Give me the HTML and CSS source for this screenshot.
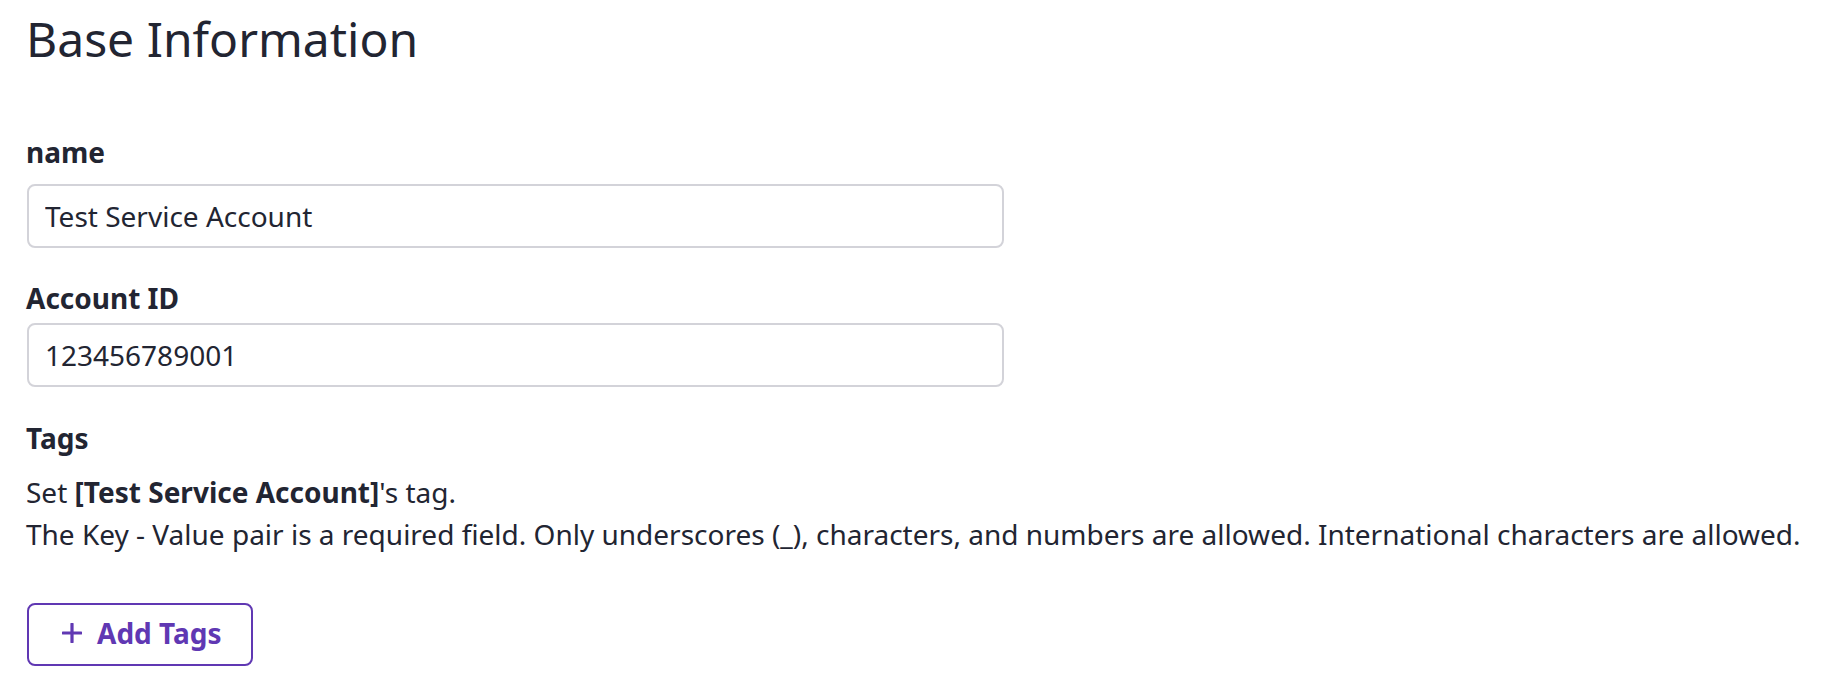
FILE: index.html
```html
<!DOCTYPE html>
<html lang="en">
<head>
<meta charset="utf-8">
<title>Base Information</title>
<link rel="stylesheet" href="styles.css">
</head>
<body>
<main class="page">
  <h1 class="title">Base Information</h1>

  <div class="field field-name">
    <label class="field-label" for="name">name</label>
    <input class="text-input" id="name" type="text" value="Test Service Account">
  </div>

  <div class="field field-account">
    <label class="field-label" for="account-id">Account ID</label>
    <input class="text-input" id="account-id" type="text" value="123456789001">
  </div>

  <section class="tags">
    <div class="field-label">Tags</div>
    <p class="tags-help">Set <strong>[Test Service Account]</strong>'s tag.<br>The Key - Value pair is a required field. Only underscores (_), characters, and numbers are allowed. International characters are allowed.</p>
    <button class="add-btn" type="button">
      <svg class="plus" viewBox="0 0 20 20" width="20" height="20" aria-hidden="true"><path d="M10 1v18M1 10h18" stroke="currentColor" stroke-width="3.2" stroke-linecap="round" fill="none"/></svg>
      <span>Add Tags</span>
    </button>
  </section>
</main>
</body>
</html>
```

FILE: styles.css
```css
* { box-sizing: border-box; }

html, body {
  margin: 0;
  background: #ffffff;
}

body {
  font-family: "Noto Sans", "Open Sans", sans-serif;
  color: #222532;
}

.page {
  padding: 7px 26px 0 26px;
}

.title {
  margin: 0;
  font-size: 48px;
  line-height: 64px;
  font-weight: 400;
  color: #222532;
}

.field {
  display: flex;
  flex-direction: column;
  align-items: flex-start;
}

.field-label {
  display: block;
  font-size: 28px;
  line-height: 42px;
  font-weight: 700;
  color: #222532;
}

.field-name { margin-top: 60px; }
.field-name .field-label { margin-bottom: 11px; }

.field-account { margin-top: 29px; }
.field-account .field-label { margin-bottom: 4px; }

.text-input {
  display: block;
  width: 977px;
  height: 64px;
  margin: 0 0 0 1px;
  padding: 0 16px;
  border: 2px solid #d3d3d9;
  border-radius: 8px;
  background: #ffffff;
  font-family: inherit;
  font-size: 28px;
  color: #222532;
  outline: none;
}

.tags { margin-top: 30px; }

.tags-help {
  margin: 12px 0 0 0;
  font-size: 28px;
  line-height: 42px;
  font-weight: 400;
  white-space: nowrap;
}

.tags-help strong { font-weight: 700; }

.add-btn {
  display: inline-flex;
  align-items: center;
  gap: 15px;
  margin: 48px 0 0 1px;
  height: 63px;
  padding: 0 29px 3px 33px;
  border: 2px solid #6038b3;
  border-radius: 8px;
  background: #ffffff;
  color: #6038b3;
  font-family: inherit;
  font-size: 28px;
  font-weight: 700;
  cursor: pointer;
}

.plus { display: block; flex: none; }
```
